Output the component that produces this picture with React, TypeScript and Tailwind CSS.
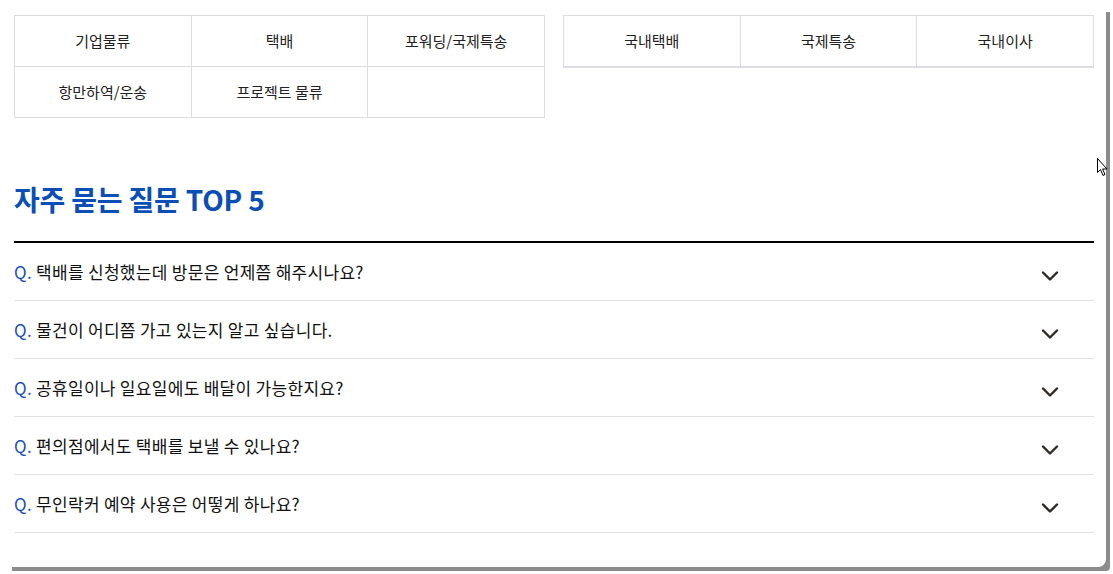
import { ChevronDown } from 'lucide-react'

const topLeft = ['기업물류', '택배', '포워딩/국제특송', '항만하역/운송', '프로젝트 물류', '']
const topRight = ['국내택배', '국제특송', '국내이사']

const faqs = [
  '택배를 신청했는데 방문은 언제쯤 해주시나요?',
  '물건이 어디쯤 가고 있는지 알고 싶습니다.',
  '공휴일이나 일요일에도 배달이 가능한지요?',
  '편의점에서도 택배를 보낼 수 있나요?',
  '무인락커 예약 사용은 어떻게 하나요?',
]

function Cell({ label }: { label: string }) {
  return (
    <div className="h-[51px] flex items-center justify-center border-r border-b border-[#dcdce2] text-[15px] text-[#222]">
      {label}
    </div>
  )
}

export default function App() {
  return (
    <div className="w-[1113px] h-[574px] bg-white overflow-hidden">
      <div
        className="relative w-[1106px] h-[567px] bg-white rounded-br-[8px] shadow-[8px_8px_0_-4px_#8c8c8c] pl-[14px] pr-[12px] pt-[15px]"
        style={{ fontFamily: '"Noto Sans CJK KR", "Noto Sans", sans-serif' }}
      >
        {/* top service tables */}
        <div className="flex gap-[18px] items-start">
          <div className="w-[531px] grid grid-cols-3 border-l border-t border-[#dcdce2]">
            {topLeft.map((t, i) => (
              <Cell key={i} label={t} />
            ))}
          </div>
          <div className="w-[531px] grid grid-cols-3 border-l border-t border-[#dcdce2] border-b border-b-[#dcdce2]">
            {topRight.map((t, i) => (
              <Cell key={i} label={t} />
            ))}
          </div>
        </div>

        {/* FAQ */}
        <h2 className="mt-[64px] text-[28px] leading-[34px] font-bold text-[#0b4fb6] tracking-[-0.2px]">
          자주 묻는 질문 TOP 5
        </h2>
        <ul className="mt-[25px] w-[1080px] border-t-2 border-black">
          {faqs.map((q) => (
            <li key={q} className="h-[58px] flex items-center justify-between border-b border-[#e0e0e6]">
              <span className="text-[17px] text-[#111] tracking-[0.3px]">
                <span className="text-[#1a4fb5]">Q.</span> {q}
              </span>
              <ChevronDown className="w-[28px] h-[28px] mr-[30px] mt-[8px] text-[#2e2a25]" strokeWidth={2.1} />
            </li>
          ))}
        </ul>

        {/* mouse cursor */}
        <svg className="absolute left-[1097px] top-[158px]" width="11" height="19" viewBox="0 0 11 19">
          <path d="M0.5 0.5 L0.5 14.5 L3.5 11.5 L6 17.5 L8 16.5 L5.5 11 L10 11 Z" fill="white" stroke="black" strokeWidth="1" />
        </svg>
      </div>
    </div>
  )
}
